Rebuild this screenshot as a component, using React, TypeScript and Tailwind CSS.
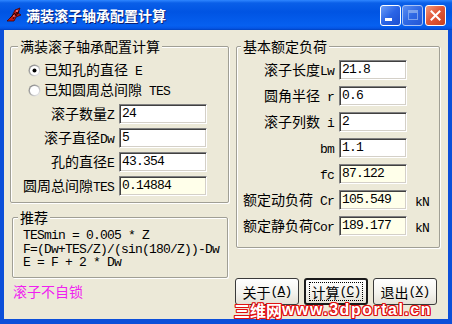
import React from "react";

const CJK = "font-['Noto_Sans_CJK_SC',sans-serif] text-[14px]";
const MONO = "font-['Liberation_Mono',monospace] text-[13px] tracking-[-0.8px]";

function L({ children }: { children: React.ReactNode }) {
  return <span className={MONO}>{children}</span>;
}

function Field({ value, width, ro }: { value: string; width: string; ro?: boolean }) {
  return (
    <div
      className={`${width} h-[20px] border border-t-[#808080] border-l-[#808080] border-b-white border-r-white shadow-[inset_1px_1px_0_#404040,inset_-1px_-1px_0_#d4d0c8] flex items-center pl-[2px] ${MONO} text-black ${ro ? "bg-[#ffffea]" : "bg-white"}`}
    >
      {value}
    </div>
  );
}

function Radio({ checked }: { checked?: boolean }) {
  return (
    <svg width="13" height="13" viewBox="0 0 13 13">
      <defs>
        <linearGradient id={checked ? "rg1" : "rg2"} x1="0" y1="0" x2="1" y2="1">
          <stop offset="0" stopColor="#7d7d7d" />
          <stop offset="0.55" stopColor="#b8b8b8" />
          <stop offset="1" stopColor="#ffffff" />
        </linearGradient>
      </defs>
      <circle cx="6.5" cy="6.5" r="6" fill={`url(#${checked ? "rg1" : "rg2"})`} />
      <circle cx="6.5" cy="6.5" r="4.6" fill="#fff" />
      {checked && <circle cx="6.5" cy="6.5" r="2" fill="#000" />}
    </svg>
  );
}

function Row({ label, value, ro }: { label: React.ReactNode; value: string; ro?: boolean }) {
  return (
    <div className="flex items-center h-[20px]">
      <div className={`w-[103px] text-right leading-[16px] ${CJK} text-black whitespace-nowrap`}>{label}</div>
      <div className="ml-[5px]">
        <Field value={value} width="w-[88px]" ro={ro} />
      </div>
    </div>
  );
}

function RRow({ label, value, ro, unit }: { label: React.ReactNode; value: string; ro?: boolean; unit?: boolean }) {
  return (
    <div className="flex items-center h-[20px]">
      <div className={`w-[97px] text-right leading-[16px] ${CJK} text-black whitespace-nowrap`}>{label}</div>
      <div className="ml-[5px]">
        <Field value={value} width="w-[68px]" ro={ro} />
      </div>
      {unit && <div className={`ml-[8px] pt-[6px] ${MONO} text-black`}>kN</div>}
    </div>
  );
}

function Btn({ children, def }: { children: React.ReactNode; def?: boolean }) {
  return (
    <div
      className={`w-[64px] h-[27px] rounded-[3px] flex items-center justify-center bg-[linear-gradient(#ffffff,#f4f3ee_55%,#e4e1d6)] ${def ? "border-2 border-[#1a1a1a]" : "border border-[#3a3a3a]"}`}
    >
      <div className={`flex items-center justify-center leading-[16px] ${CJK} text-black ${def ? "border border-dotted border-black w-[54px] h-[19px]" : ""}`}>
        {children}
      </div>
    </div>
  );
}

export default function App() {
  return (
    <div className="w-[452px] h-[324px] bg-[#0c4fd9] flex flex-col overflow-hidden">
      {/* Title bar */}
      <div className="h-[30px] flex items-center bg-[linear-gradient(to_bottom,#2f86ff_0%,#0a5fe8_10%,#0054e3_40%,#0660f0_85%,#0556e6_94%,#0041c0_100%)]">
        <div className="ml-[6px] w-[16px] h-[16px]">
          <svg width="16" height="16" viewBox="0 0 16 16">
            <path d="M1 14 L6 9 L9 3 L14 1 L12 6 L15 8 L10 10 L8 14 Z" fill="#c01818" stroke="#400000" strokeWidth="0.8" />
            <path d="M4 11 L9 6 M7 12 L11 5 M10 9 L13 4" stroke="#1a0000" strokeWidth="0.9" />
            <circle cx="11" cy="4" r="1" fill="#ff8080" />
            <circle cx="8" cy="9" r="0.9" fill="#ff8080" />
          </svg>
        </div>
        <div className={`ml-[4px] font-['Noto_Sans_CJK_SC',sans-serif] text-[14px] font-bold text-white leading-[16px] [text-shadow:1px_1px_0_#0a1f73]`}>
          满装滚子轴承配置计算
        </div>
        <div className="ml-auto mr-[6px] flex items-center gap-[1px]">
          <div className="w-[21px] h-[21px] rounded-[3px] border border-white bg-[linear-gradient(135deg,#6b9df7,#2a64e6_50%,#1c4fd0)] flex items-end pl-[4px] pb-[4px]">
            <div className="w-[7px] h-[3px] bg-white" />
          </div>
          <div className="w-[21px] h-[21px] rounded-[3px] border border-[#a9c3f5] bg-[linear-gradient(135deg,#5a8ef2,#2f68e4_50%,#2457d6)] flex items-center justify-center">
            <div className="w-[10px] h-[10px] border border-[#8fb0ef] border-t-[3px] opacity-80" />
          </div>
          <div className="ml-[1px] w-[21px] h-[21px] rounded-[3px] border border-white bg-[linear-gradient(135deg,#f09a7c,#e2593a_45%,#c8401d)] flex items-center justify-center">
            <svg width="11" height="11" viewBox="0 0 11 11">
              <path d="M1.5 1.5 L9.5 9.5 M9.5 1.5 L1.5 9.5" stroke="#fff" strokeWidth="2" strokeLinecap="square" />
            </svg>
          </div>
        </div>
      </div>

      {/* Client */}
      <div className="relative mx-[4px] mb-[5px] flex-1 bg-[#ece9d8] flex pt-[8px]">
        {/* Left column */}
        <div className="ml-[6px] w-[219px] flex flex-col">
          <fieldset className="border border-[#a09f95] rounded-[2px] shadow-[inset_1px_1px_0_#fff,1px_1px_0_#fff] pb-[6px]">
            <legend className={`ml-[7px] px-[2px] leading-[16px] bg-[#ece9d8] ${CJK} text-black`}>满装滚子轴承配置计算</legend>
            <div className="pt-[6px]">
              <div className="flex items-center h-[20px] pl-[17px]">
                <Radio checked />
                <span className={`ml-[3px] leading-[16px] ${CJK} text-black`}>
                  已知孔的直径<L> E</L>
                </span>
              </div>
              <div className="flex items-center h-[20px] pl-[17px]">
                <Radio />
                <span className={`ml-[3px] leading-[16px] ${CJK} text-black`}>
                  已知圆周总间隙<L> TES</L>
                </span>
              </div>
              <div className="mt-[4px] flex flex-col gap-[4px]">
                <Row label={<>滚子数量<L>Z</L></>} value="24" />
                <Row label={<>滚子直径<L>Dw</L></>} value="5" />
                <Row label={<>孔的直径<L>E</L></>} value="43.354" />
                <Row label={<>圆周总间隙<L>TES</L></>} value="0.14884" ro />
              </div>
            </div>
          </fieldset>

          <fieldset className="mt-[6px] ml-[2px] w-[216px] border border-[#a09f95] rounded-[2px] shadow-[inset_1px_1px_0_#fff,1px_1px_0_#fff] pb-[7px]">
            <legend className={`ml-[5px] px-[2px] leading-[16px] bg-[#ece9d8] ${CJK} text-black`}>推荐</legend>
            <div className={`pt-[4px] pl-[10px] ${MONO} leading-[13.5px] text-black whitespace-pre`}>
              <div>TESmin = 0.005 * Z</div>
              <div>F=(Dw+TES/Z)/(sin(180/Z))-Dw</div>
              <div>E = F + 2 * Dw</div>
            </div>
          </fieldset>

          <div className={`mt-[5px] ml-[3px] leading-[16px] ${CJK} text-[#f020f0]`}>滚子不自锁</div>
        </div>

        {/* Right column */}
        <div className="ml-[7px] w-[204px] flex flex-col">
          <fieldset className="border border-[#a09f95] rounded-[2px] shadow-[inset_1px_1px_0_#fff,1px_1px_0_#fff] pb-[11px]">
            <legend className={`ml-[4px] px-[2px] leading-[16px] bg-[#ece9d8] ${CJK} text-black`}>基本额定负荷</legend>
            <div className="pt-[6px] flex flex-col gap-[6px]">
              <RRow label={<>滚子长度<L>Lw</L></>} value="21.8" />
              <RRow label={<>圆角半径<L> r</L></>} value="0.6" />
              <RRow label={<>滚子列数<L> i</L></>} value="2" />
              <RRow label={<L>bm</L>} value="1.1" />
              <RRow label={<L>fc</L>} value="87.122" ro />
              <RRow label={<>额定动负荷<L> Cr</L></>} value="105.549" ro unit />
              <RRow label={<>额定静负荷<L>Cor</L></>} value="189.177" ro unit />
            </div>
          </fieldset>

          <div className="mt-[30px] ml-[-1px] flex gap-[5px]">
            <Btn>
              关于<L>(<span className="underline">A</span>)</L>
            </Btn>
            <Btn def>
              计算<L>(<span className="underline">C</span>)</L>
            </Btn>
            <Btn>
              退出<L>(<span className="underline">X</span>)</L>
            </Btn>
          </div>
        </div>

        {/* Watermark stamped over the picture */}
        <div className="absolute left-[230px] top-[272px] flex items-center leading-[16px] text-white font-bold [text-shadow:1px_0_#e01010,-1px_0_#e01010,0_1px_#e01010,0_-1px_#e01010,1px_1px_#e01010,-1px_-1px_#e01010,1px_-1px_#e01010,-1px_1px_#e01010]">
          <span className="font-['Noto_Sans_CJK_SC',sans-serif] text-[16px]">三维网</span>
          <span className="font-['Liberation_Sans',sans-serif] text-[16px] tracking-[1.5px]">www.3dportal.cn</span>
        </div>
      </div>
    </div>
  );
}
